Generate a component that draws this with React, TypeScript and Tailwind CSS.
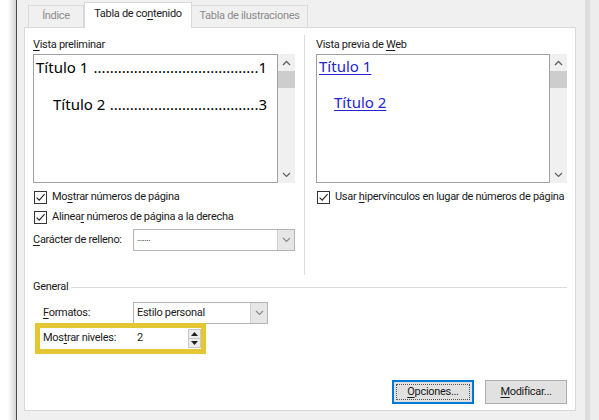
import React from 'react';

const ui = "font-['Roboto',sans-serif] text-[11px] tracking-[-0.3px] text-[#1b1b1b]";

const Check = () => (
  <span className="flex h-[13px] w-[13px] shrink-0 items-center justify-center border border-[#333] bg-white">
    <svg width="11" height="11" viewBox="0 0 11 11">
      <path d="M1.6 5.6 L4.2 8.2 L9.6 2.2" fill="none" stroke="#222" strokeWidth="1.1" />
    </svg>
  </span>
);

const ChevronUp = () => (
  <svg width="9" height="6" viewBox="0 0 9 6">
    <path d="M1 5 L4.5 1.5 L8 5" fill="none" stroke="#606060" strokeWidth="1.3" />
  </svg>
);

const ChevronDown = ({ color = '#606060' }: { color?: string }) => (
  <svg width="9" height="6" viewBox="0 0 9 6">
    <path d="M1 1 L4.5 4.5 L8 1" fill="none" stroke={color} strokeWidth="1.2" />
  </svg>
);

const Scrollbar = () => (
  <div className="flex w-[17px] shrink-0 flex-col bg-[#f0f0f0]">
    <div className="flex h-[17px] items-center justify-center">
      <ChevronUp />
    </div>
    <div className="h-[17px] bg-[#cdcdcd]" />
    <div className="flex-1" />
    <div className="flex h-[17px] items-center justify-center">
      <ChevronDown />
    </div>
  </div>
);

const Combo = ({ value, width, small }: { value: string; width: string; small?: boolean }) => (
  <div className={`flex h-[22px] shrink-0 border border-[#b4b4b4] bg-white ${width}`}>
    <div className={`flex flex-1 items-center pl-[3px] ${small ? 'pb-[3px] text-[9px] tracking-[-0.5px] text-black' : ''}`}>{value}</div>
    <div className="flex w-[17px] items-center justify-center border-l border-[#cfcfcf] bg-[#e6e6e6]">
      <ChevronDown color="#8a8a8a" />
    </div>
  </div>
);

// leader dots between a heading and its page number
const Dots = ({ count }: { count: number }) => (
  <span className="min-w-0 flex-1 overflow-hidden whitespace-nowrap text-right">
    {'.'.repeat(count)}
  </span>
);

export default function App() {
  return (
    <div className={`flex h-[420px] w-[599px] overflow-hidden bg-white ${ui}`}>
      <div className="w-[16px] bg-linear-to-r from-white via-white to-[#d4d4d4]" />
      <div className="w-px bg-[#4a4a4a]" />

      {/* dialog */}
      <div className="flex w-[568px] flex-col bg-[#f0f0f0] pl-[7px] pr-[9px] pt-[2px]">
        {/* tabs */}
        <div className="flex h-[25px] items-end pl-[4px]">
          <div className="flex h-[22px] w-[56px] items-center justify-center border border-b-0 border-[#d9d9d9] text-[#8c8c8c]">
            Índice
          </div>
          <div className="relative z-10 -mb-px flex h-[26px] w-[108px] items-center justify-center whitespace-nowrap border border-b-0 border-[#d9d9d9] bg-white pb-[2px]">
            Tabla de co<span className="underline underline-offset-2">n</span>tenido
          </div>
          <div className="flex h-[22px] w-[116px] items-center justify-center whitespace-nowrap border border-b-0 border-l-0 border-[#d9d9d9] text-[#8c8c8c]">
            Tabla de ilustraciones
          </div>
        </div>

        {/* panel */}
        <div className="flex h-[384px] flex-col border border-[#d9d9d9] bg-white pl-[8px] pr-[8px] pt-[9px]">
          <div className="flex h-[238px]">
            {/* left column */}
            <div className="flex w-[262px] flex-col">
              <div className="h-[16px] leading-[16px]">
                <span className="underline underline-offset-2">V</span>ista preliminar
              </div>
              <div className="mt-px flex h-[129px]">
                <div className="flex min-w-0 flex-1 flex-col border border-[#a0a0a0] pl-[2px] pr-[10px] pt-[1px] font-['Noto_Sans',sans-serif] text-[15px] leading-[22px] tracking-normal text-black">
                  <div className="flex">
                    <span className="whitespace-pre">Título 1 </span>
                    <Dots count={41} />
                    <span>1</span>
                  </div>
                  <div className="mt-[15px] flex pl-[17px]">
                    <span className="whitespace-pre">Título 2 </span>
                    <Dots count={37} />
                    <span>3</span>
                  </div>
                </div>
                <Scrollbar />
              </div>
              <div className="mt-[4px] flex h-[20px] items-center gap-[5px] pl-px">
                <Check />
                <span>
                  Mo<span className="underline underline-offset-2">s</span>trar números de página
                </span>
              </div>
              <div className="flex h-[20px] items-center gap-[5px] pl-px">
                <Check />
                <span>
                  Alinea<span className="underline underline-offset-2">r</span> números de página a la derecha
                </span>
              </div>
              <div className="mt-[2px] flex items-center">
                <span className="w-[100px] whitespace-nowrap">
                  <span className="underline underline-offset-2">C</span>arácter de relleno:
                </span>
                <Combo value="......." width="w-[162px]" small />
              </div>
            </div>

            {/* separator */}
            <div className="-mt-[2px] ml-[9px] mr-[11px] w-px bg-[#dcdcdc]" />

            {/* right column */}
            <div className="flex w-[251px] flex-col">
              <div className="h-[16px] leading-[16px]">
                Vista previa de <span className="underline underline-offset-2">W</span>eb
              </div>
              <div className="mt-px flex h-[129px]">
                <div className="flex min-w-0 flex-1 flex-col border border-[#a0a0a0] pl-[2px] font-['Noto_Sans',sans-serif] text-[15px] leading-[22px] tracking-normal text-[#2424d0]">
                  <div>
                    <span className="underline underline-offset-2">Título 1</span>
                  </div>
                  <div className="mt-[14px] pl-[15px]">
                    <span className="underline underline-offset-2">Título 2</span>
                  </div>
                </div>
                <Scrollbar />
              </div>
              <div className="mt-[4px] flex h-[20px] items-center gap-[5px] pl-px">
                <Check />
                <span className="whitespace-nowrap">
                  Usar <span className="underline underline-offset-2">h</span>ipervínculos en lugar de números de página
                </span>
              </div>
            </div>
          </div>

          {/* general */}
          <div className="mt-[4px] flex h-[16px] items-center">
            <span>General</span>
            <div className="ml-[3px] h-px flex-1 bg-[#dcdcdc]" />
          </div>
          <div className="mt-[7px] flex items-center pl-[10px]">
            <span className="w-[90px]">
              <span className="underline underline-offset-2">F</span>ormatos:
            </span>
            <Combo value="Estilo personal" width="w-[135px]" />
          </div>
          <div className="-mt-px ml-[2px] flex h-[31px] w-[171px] items-center border-[5px] border-[#e5c634] pl-[3px]">
            <span className="w-[90px] whitespace-nowrap">
              Mos<span className="underline underline-offset-2">t</span>rar niveles:
            </span>
            <div className="flex h-full flex-1 items-center">
              <span className="flex-1 pl-[4px]">2</span>
              <div className="flex h-[19px] w-[13px] flex-col border border-[#c8c8c8]">
                <div className="flex flex-1 items-center justify-center border-b border-[#c8c8c8] bg-[#ececec]">
                  <svg width="7" height="4" viewBox="0 0 7 4"><path d="M0 4 L3.5 0 L7 4 Z" fill="#222" /></svg>
                </div>
                <div className="flex flex-1 items-center justify-center bg-[#ececec]">
                  <svg width="7" height="4" viewBox="0 0 7 4"><path d="M0 0 L3.5 4 L7 0 Z" fill="#222" /></svg>
                </div>
              </div>
            </div>
          </div>

          {/* buttons */}
          <div className="mt-[26px] flex justify-end gap-[11px]">
            <button className="relative flex h-[24px] w-[82px] items-center justify-center border border-[#0078d7] bg-[#e1e1e1] shadow-[inset_0_0_0_1px_#0078d7]">
              <span className="absolute inset-[3px] border border-dotted border-[#555]" />
              <span>
                <span className="underline underline-offset-2">O</span>pciones...
              </span>
            </button>
            <button className="flex h-[24px] w-[82px] items-center justify-center border border-[#adadad] bg-[#e1e1e1]">
              <span>
                <span className="underline underline-offset-2">M</span>odificar...
              </span>
            </button>
          </div>
        </div>
      </div>

      <div className="w-[5px] bg-[#dedede]" />
      <div className="flex-1 bg-[#ededed]" />
    </div>
  );
}
